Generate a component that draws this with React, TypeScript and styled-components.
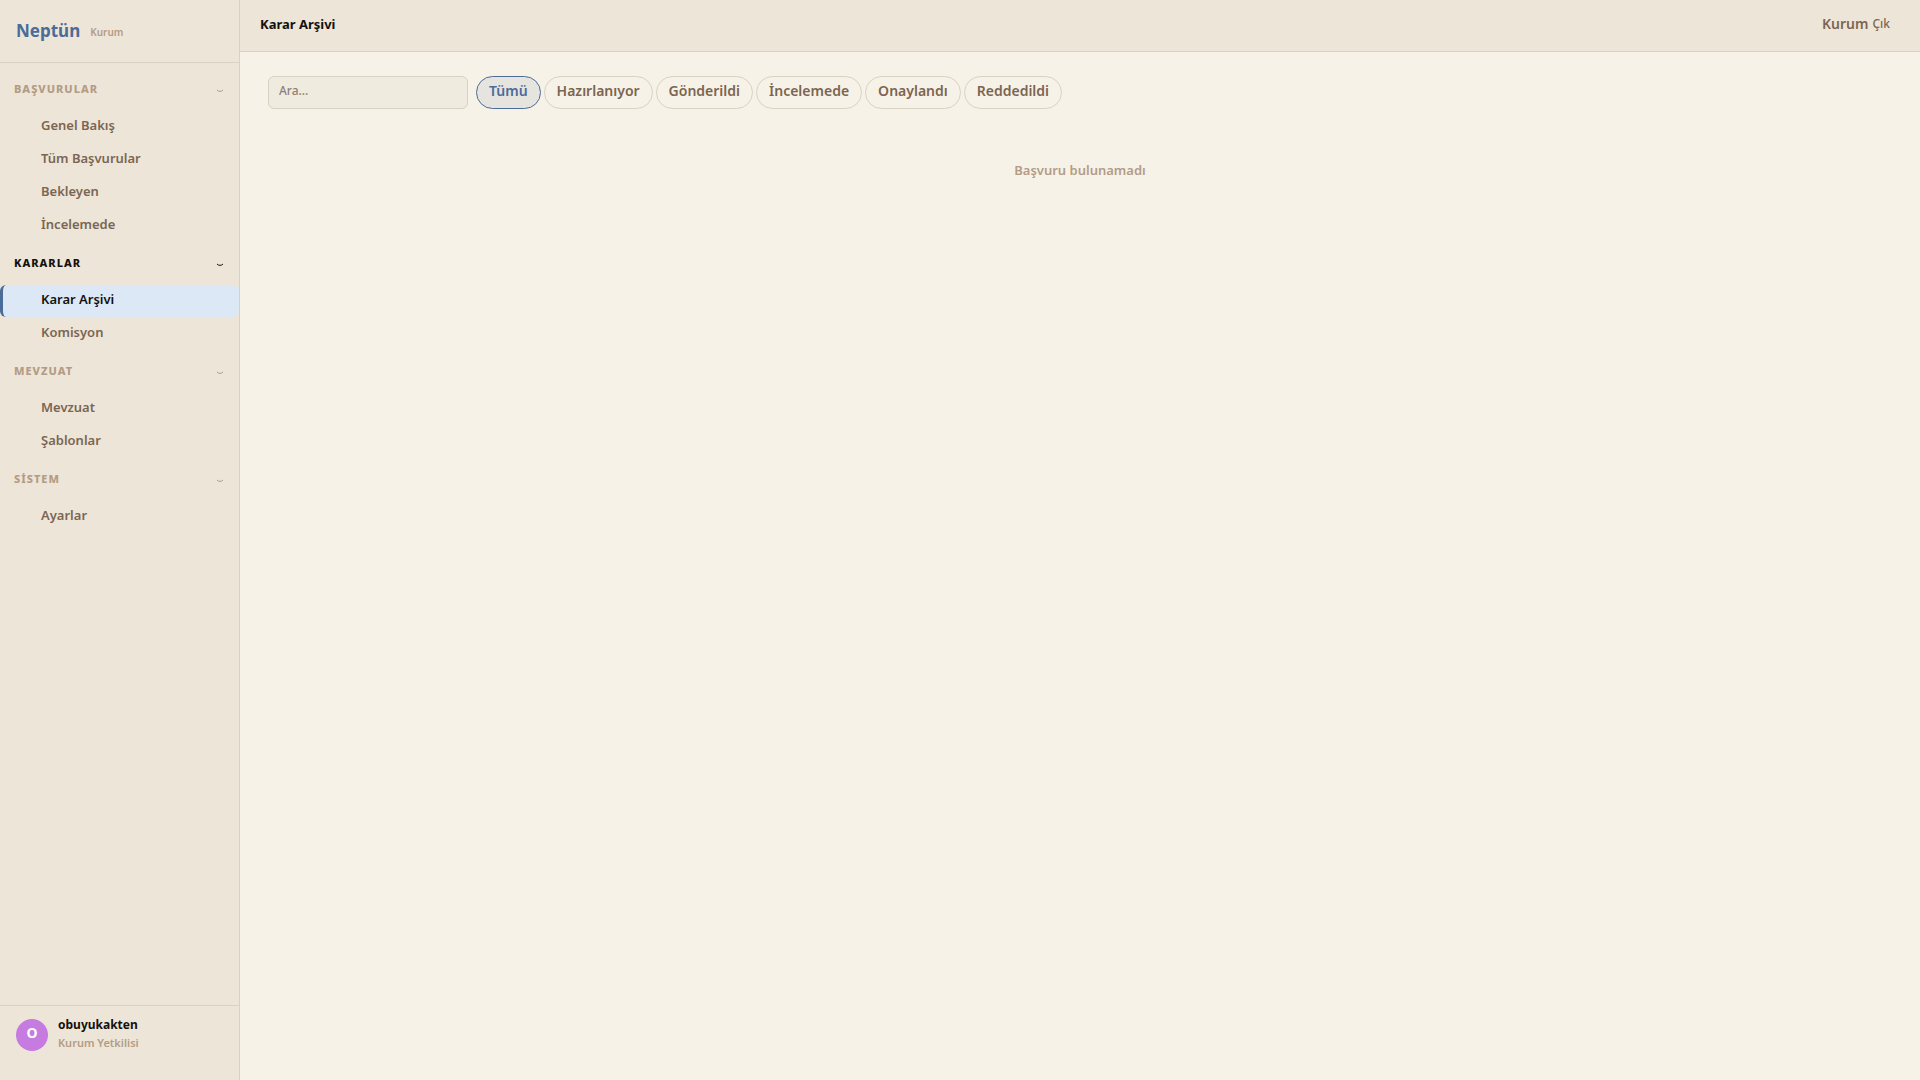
import React from 'react';
import styled, { createGlobalStyle } from 'styled-components';

const color = {
  page: '#f7f2e7',
  panel: '#ede5d8',
  line: '#d9d1c1',
  ink: '#14110d',
  text: '#7b6552',
  muted: '#b39c85',
  accent: '#4b6b98',
  active: '#dce8f5',
};

const Global = createGlobalStyle`
  * { box-sizing: border-box; }
  body { margin: 0; background: ${color.page}; }
  body, button, input {
    font-family: 'Noto Sans', 'Open Sans', sans-serif;
  }
`;

const Shell = styled.div`
  display: grid;
  grid-template-columns: 240px 1fr;
  min-height: 100vh;
`;

const Sidebar = styled.aside`
  display: flex;
  flex-direction: column;
  background: ${color.panel};
  border-right: 1px solid ${color.line};
`;

const Brand = styled.div`
  display: flex;
  align-items: center;
  gap: 10px;
  padding: 19px 16px;
  border-bottom: 1px solid ${color.line};
  line-height: 24px;
`;

const BrandName = styled.span`
  font-size: 17px;
  font-weight: 700;
  color: ${color.accent};
`;

const BrandTag = styled.span`
  padding-top: 2px;
  font-size: 10px;
  line-height: 22px;
  font-weight: 600;
  color: ${color.muted};
`;

const Nav = styled.nav`
  flex: 1;
  display: flex;
  flex-direction: column;
  gap: 7px;
  padding: 12px 0;
`;

const Section = styled.section`
  display: flex;
  flex-direction: column;
  gap: 4px;
`;

const SectionHead = styled.button<{ $current?: boolean }>`
  display: flex;
  align-items: center;
  justify-content: space-between;
  height: 32px;
  padding: 0 15px 6px 14px;
  border: 0;
  background: none;
  font-size: 11px;
  font-weight: 800;
  letter-spacing: 1px;
  color: ${(p) => (p.$current ? color.ink : color.muted)};
  cursor: pointer;

  svg {
    margin-top: 6px;
  }
`;

const Items = styled.div`
  display: flex;
  flex-direction: column;
  gap: 1px;
`;

const Item = styled.a<{ $active?: boolean }>`
  height: 32px;
  padding: 4px 12px 8px 38px;
  border-left: 3px solid ${(p) => (p.$active ? color.accent : 'transparent')};
  border-radius: 6px;
  background: ${(p) => (p.$active ? color.active : 'transparent')};
  font-size: 13px;
  line-height: 20px;
  font-weight: 600;
  color: ${(p) => (p.$active ? color.ink : color.text)};
  text-decoration: none;
`;

const Account = styled.div`
  display: flex;
  align-items: center;
  gap: 10px;
  padding: 10px 16px 26px;
  border-top: 1px solid ${color.line};
`;

const Avatar = styled.div`
  width: 32px;
  height: 32px;
  border-radius: 50%;
  background: #c67be0;
  color: #fff;
  font-size: 14px;
  line-height: 27px;
  font-weight: 700;
  text-align: center;
`;

const AccountText = styled.div`
  padding-bottom: 2px;
  line-height: 18px;
`;

const AccountName = styled.div`
  font-size: 12px;
  font-weight: 700;
  color: ${color.ink};
`;

const AccountRole = styled.div`
  font-size: 11px;
  font-weight: 600;
  color: ${color.muted};
`;

const Main = styled.div`
  display: flex;
  flex-direction: column;
`;

const TopBar = styled.header`
  display: flex;
  align-items: center;
  justify-content: space-between;
  height: 52px;
  padding: 0 20px 4px;
  background: ${color.panel};
  border-bottom: 1px solid ${color.line};
`;

const Title = styled.h1`
  margin: 0;
  font-size: 13px;
  font-weight: 700;
  color: ${color.ink};
`;

const Session = styled.div`
  display: flex;
  align-items: center;
  font-size: 14px;
  font-weight: 600;
  color: ${color.text};
`;

const Exit = styled.button`
  padding: 0 10px 0 4px;
  border: 0;
  background: none;
  font-size: 12px;
  font-weight: 500;
  color: ${color.text};
  cursor: pointer;
`;

const Content = styled.main`
  padding: 24px 28px;
`;

const Filters = styled.div`
  display: flex;
  gap: 8px;
`;

const Search = styled.input`
  width: 200px;
  height: 33px;
  padding: 0 10px 4px;
  border: 1px solid ${color.line};
  border-radius: 6px;
  background: #f0ebdf;
  font-size: 12px;
  font-weight: 500;
  color: ${color.ink};

  &::placeholder {
    color: #8b8175;
    opacity: 1;
  }
`;

const Chips = styled.div`
  display: flex;
  gap: 3px;
`;

const Chip = styled.button<{ $on?: boolean }>`
  height: 33px;
  padding: 0 12px 4px;
  border: 1px solid ${(p) => (p.$on ? color.accent : color.line)};
  border-radius: 20px;
  background: ${(p) => (p.$on ? '#e5e4df' : 'transparent')};
  font-size: 14px;
  font-weight: 600;
  color: ${(p) => (p.$on ? color.accent : color.text)};
  cursor: pointer;
`;

const Empty = styled.p`
  margin: 0;
  padding: 51px 0;
  font-size: 13px;
  line-height: 20px;
  font-weight: 600;
  text-align: center;
  color: ${color.muted};
`;

const Chevron = () => (
  <svg width="8" height="4" viewBox="0 0 8 4" fill="none" aria-hidden="true">
    <path d="M1 1C2.4 2.8 5.6 2.8 7 1" stroke="currentColor" strokeWidth="1" />
  </svg>
);

const sections = [
  { title: 'BAŞVURULAR', items: ['Genel Bakış', 'Tüm Başvurular', 'Bekleyen', 'İncelemede'] },
  { title: 'KARARLAR', items: ['Karar Arşivi', 'Komisyon'] },
  { title: 'MEVZUAT', items: ['Mevzuat', 'Şablonlar'] },
  { title: 'SİSTEM', items: ['Ayarlar'] },
];

const statuses = ['Tümü', 'Hazırlanıyor', 'Gönderildi', 'İncelemede', 'Onaylandı', 'Reddedildi'];

export default function App() {
  const page = 'Karar Arşivi';
  const [status, setStatus] = React.useState('Tümü');

  return (
    <>
      <Global />
      <Shell lang="tr">
        <Sidebar>
          <Brand>
            <BrandName>Neptün</BrandName>
            <BrandTag>Kurum</BrandTag>
          </Brand>
          <Nav>
            {sections.map((s) => (
              <Section key={s.title}>
                <SectionHead type="button" $current={s.items.includes(page)}>
                  {s.title}
                  <Chevron />
                </SectionHead>
                <Items>
                  {s.items.map((item) => (
                    <Item key={item} href="#" $active={item === page}>
                      {item}
                    </Item>
                  ))}
                </Items>
              </Section>
            ))}
          </Nav>
          <Account>
            <Avatar>O</Avatar>
            <AccountText>
              <AccountName>obuyukakten</AccountName>
              <AccountRole>Kurum Yetkilisi</AccountRole>
            </AccountText>
          </Account>
        </Sidebar>
        <Main>
          <TopBar>
            <Title>{page}</Title>
            <Session>
              Kurum
              <Exit type="button">Çık</Exit>
            </Session>
          </TopBar>
          <Content>
            <Filters>
              <Search type="search" aria-label="Ara" placeholder="Ara..." />
              <Chips>
                {statuses.map((s) => (
                  <Chip key={s} type="button" $on={s === status} onClick={() => setStatus(s)}>
                    {s}
                  </Chip>
                ))}
              </Chips>
            </Filters>
            <Empty>Başvuru bulunamadı</Empty>
          </Content>
        </Main>
      </Shell>
    </>
  );
}
